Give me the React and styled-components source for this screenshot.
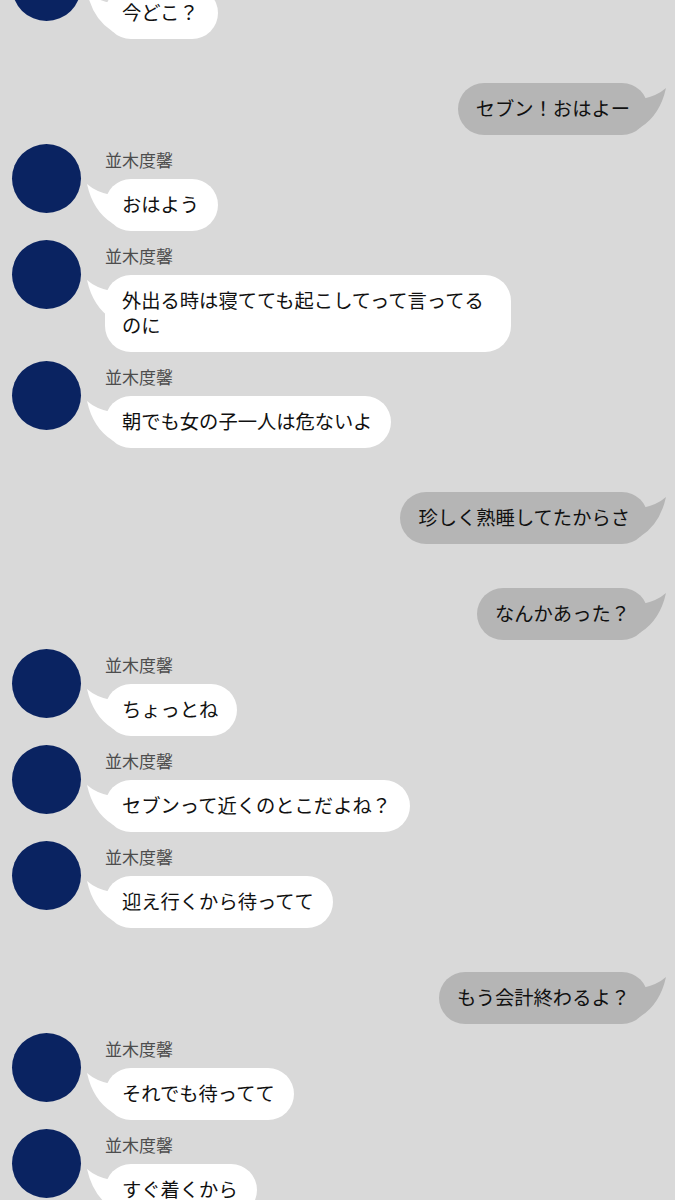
import React from 'react';
import styled, { createGlobalStyle } from 'styled-components';

const GlobalStyle = createGlobalStyle`
  html, body {
    margin: 0;
    padding: 0;
    background: #d9d9d9;
    overflow: hidden;
  }
  * { box-sizing: border-box; }
`

const NAME = '並木度馨'

const messages = [
  { from: 'them', text: '今どこ？' },
  { from: 'me', text: 'セブン！おはよー' },
  { from: 'them', text: 'おはよう' },
  { from: 'them', text: '外出る時は寝てても起こしてって言ってるのに' },
  { from: 'them', text: '朝でも女の子一人は危ないよ' },
  { from: 'me', text: '珍しく熟睡してたからさ' },
  { from: 'me', text: 'なんかあった？' },
  { from: 'them', text: 'ちょっとね' },
  { from: 'them', text: 'セブンって近くのとこだよね？' },
  { from: 'them', text: '迎え行くから待ってて' },
  { from: 'me', text: 'もう会計終わるよ？' },
  { from: 'them', text: 'それでも待ってて' },
  { from: 'them', text: 'すぐ着くから' },
]

let Screen = styled.div`
  width: 675px;
  height: 1200px;
  overflow: hidden;
  font-family: "Noto Sans CJK JP", "Noto Sans", sans-serif;
`
let Thread = styled.div`
  display: flex;
  flex-direction: column;
  margin-top: -57px;
`
let IncomingRow = styled.div`
  display: flex;
  align-items: flex-start;
  gap: 24px;
  margin-top: 9px;
  padding-left: 12px;
`
let Avatar = styled.div`
  flex: none;
  width: 69px;
  height: 69px;
  border-radius: 50%;
  background: #0a2361;
`
let Body = styled.div`
  display: flex;
  flex-direction: column;
  align-items: flex-start;
  padding-top: 6px;
`
let Name = styled.div`
  height: 20px;
  font-size: 17px;
  line-height: 20px;
  color: #4d4d4d;
  margin-bottom: 9px;
`
let OutgoingRow = styled.div`
  display: flex;
  justify-content: flex-end;
  margin-top: 44px;
  padding-right: 27px;
`
let Bubble = styled.div`
  position: relative;
  max-width: 406px;
  padding: 13px 19px 14px 17px;
  border-radius: 26px;
  font-size: 19.3px;
  line-height: 25px;
  color: #111;
  background: ${props => props.$mine ? '#b5b5b5' : '#ffffff'};
  ${props => props.$mine && 'padding: 13px 18px 14px;'}
`
let TailSvg = styled.svg`
  position: absolute;
  top: 4px;
  ${props => props.$mine ? 'right: -19px; transform: scaleX(-1);' : 'left: -19px;'}
`

function Tail({ mine }) {
  return (
    <TailSvg $mine={mine} width="30" height="42" viewBox="0 0 30 42">
      <path
        d="M1 1 Q10 9 25 12 L30 12 L30 42 L26 40 Q7 28 1 1 Z"
        fill={mine ? '#b5b5b5' : '#ffffff'}
      />
    </TailSvg>
  )
}

export default function App() {
  return (
    <Screen>
      <GlobalStyle />
      <Thread>
        {messages.map((m, i) =>
          m.from === 'me' ? (
            <OutgoingRow key={i}>
              <Bubble $mine>
                <Tail mine />
                {m.text}
              </Bubble>
            </OutgoingRow>
          ) : (
            <IncomingRow key={i}>
              <Avatar />
              <Body>
                <Name>{NAME}</Name>
                <Bubble>
                  <Tail />
                  {m.text}
                </Bubble>
              </Body>
            </IncomingRow>
          )
        )}
      </Thread>
    </Screen>
  );
}
